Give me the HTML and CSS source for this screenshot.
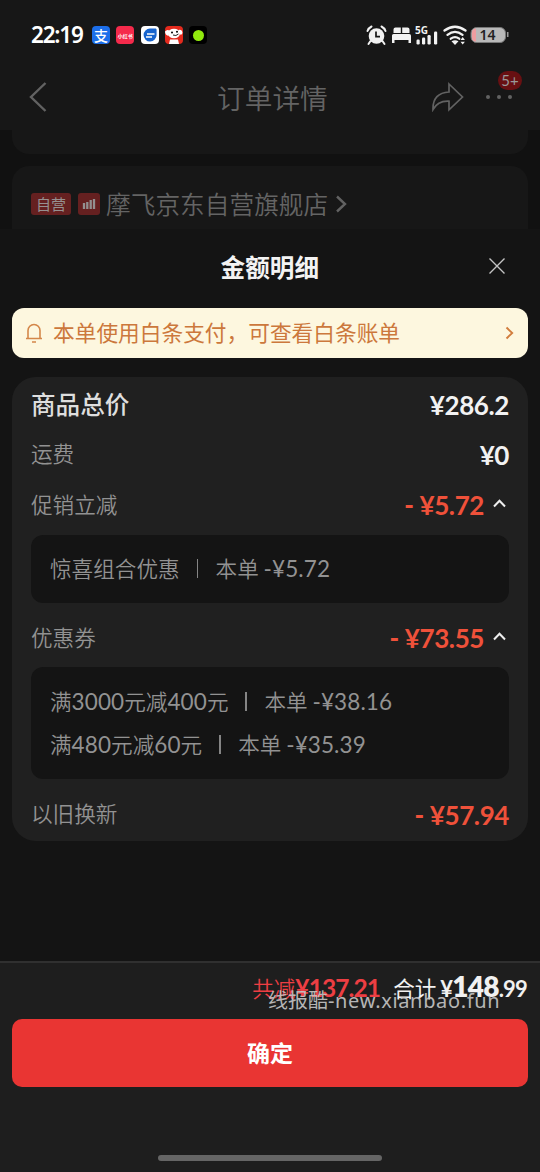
FILE: index.html
```html
<!DOCTYPE html>
<html lang="zh-CN">
<head>
<meta charset="utf-8">
<title>订单详情</title>
<link rel="stylesheet" href="styles.css">
</head>
<body>
<div class="phone">
  <header class="status">
    <span class="time">22:19</span>
    <div class="apps">
      <span class="app app-pay">支</span>
      <span class="app app-red">小红书</span>
      <span class="app app-white"><svg width="18" height="18" viewBox="0 0 18 18"><path d="M9 2.500h5.700q1 0 .9 1.500V9A6.500 6.500 0 1 1 9 2.500Z" fill="#1764ce"/><path d="M6 8h7.500M5 11h6" stroke="#fff" stroke-width="1.700"/></svg></span>
      <span class="app app-dog"><svg width="18" height="18" viewBox="0 0 18 18"><ellipse cx="9" cy="7.500" rx="6" ry="4.800" fill="#fff"/><path d="M0 5.500Q2 3 4.500 4.500L3.500 10Q0 9 0 5.500M13.500 4q3.500-1 4 3-1 3-3 1zM5 13.500h8l1 4.500H4z" fill="#fff"/><circle cx="7" cy="6.500" r="1"/><circle cx="12" cy="5.800" r="1"/><path d="M8 9q3 1.500 5.500-1" stroke="#222" fill="none"/></svg></span>
      <span class="app app-black"><i class="dot"></i></span>
    </div>
    <svg class="sys" width="144" height="24" viewBox="0 0 144 24">
      <g fill="#f2f2f2">
        <circle cx="10.500" cy="13" r="7.800"/>
        <path d="M4.500 18l-2 3M16.500 18l2 3M1.500 8q1-3 4-4.500M19.500 8q-1-3-4-4.500" stroke="#f2f2f2" stroke-width="2" fill="none" stroke-linecap="round"/>
        <path d="M10 8.500v5.200h4" stroke="#171717" stroke-width="1.700" fill="none"/>
        <path d="M27.500 10V6.500Q27.500 4.500 29.500 4.500h5.300V10zM36.200 10V4.500h5.300q2 0 2 2V10zM26 12.500q0-1.500 1.500-1.500h15.800q1.700 0 1.700 1.700V20h-2.500v-3h-14v3H26z"/>
        <rect x="50.500" y="16.500" width="3.200" height="5" rx="1.200"/><rect x="56" y="14.500" width="3.200" height="7" rx="1.200"/><rect x="61.500" y="12" width="3.200" height="9.500" rx="1.200"/><rect x="68" y="8.500" width="3.200" height="13" rx="1.200"/>
        <text x="49" y="10.500" class="net">5G</text>
        <path d="M78.500 7.500q10.500-7.500 21 0M81.500 11.800q7.500-5.800 15 0M84.800 15.700q4.200-3.200 8.400 0" fill="none" stroke="#f2f2f2" stroke-width="2.300" stroke-linecap="round"/>
        <path d="M85.500 18.300q3.500-2 7 0L89 22zM94.500 17l2.200-3 2.200 3zM94.500 18.700h4.400L96.700 21.500z"/>
      </g>
      <rect x="105" y="4.500" width="34.500" height="15" rx="5.500" fill="#b9b9b9" stroke="#777"/>
      <path d="M110 5.500q-4 0-4 4.500v4q0 4.500 4 4.500z" fill="#ef9da0"/>
      <path d="M141.700 9v5" stroke="#999" stroke-width="1.600"/>
      <text x="113.500" y="17.300" class="batt">14</text>
    </svg>
  </header>

  <nav class="nav">
    <svg width="20" height="32" viewBox="0 0 20 32"><path d="M17.500 2L3 16 17.500 30" class="grey-line wide"/></svg>
    <h1 class="nav-title">订单详情</h1>
    <svg class="share" width="34" height="30" viewBox="0 0 34 30"><path d="M18 2l13.500 13L18 27.800v-8.600Q7 18.500 2 27.500 1.500 11 18 10z" class="grey-line"/></svg>
    <div class="more"><i></i><i></i><i></i><span class="badge">5+</span></div>
  </nav>

  <div class="page-bg">
    <div class="prev-card"></div>
    <div class="shop-card">
      <span class="tag">自营</span>
      <span class="level"><svg width="14" height="12" viewBox="0 0 14 12"><path d="M2 5V11M5.300 4V11M8.700 2V11M12 1V11" stroke="#939090" stroke-width="2.300"/></svg></span>
      <span class="shop-name">摩飞京东自营旗舰店</span>
      <svg width="12" height="18" viewBox="0 0 12 18"><path d="M2 1.500L10 9 2 16.500" class="grey-line wide"/></svg>
    </div>
  </div>

  <main class="sheet">
    <div class="sheet-head">
      <h2>金额明细</h2>
      <svg class="close" width="18" height="18" viewBox="0 0 18 18"><path d="M1.500 1.500l15 15M16.500 1.500l-15 15" stroke="#c4c4c4" stroke-width="1.400"/></svg>
    </div>
    <div class="notice">
      <svg width="18" height="22" viewBox="0 0 18 22"><path d="M1 16.500h16M3 16.500V8.500a6 6 0 0 1 12 0V16.500M7 20h4" fill="none" stroke="#d4874a" stroke-width="1.600"/></svg>
      <span class="notice-text">本单使用白条支付，可查看白条账单</span>
      <svg width="9" height="14" viewBox="0 0 9 14"><path d="M1.500 1.500L7.200 7 1.500 12.500" fill="none" stroke="#d17d3d" stroke-width="1.900"/></svg>
    </div>
    <section class="card">
      <div class="row total"><span class="label">商品总价</span><span class="price">¥286.2</span></div>
      <div class="row"><span class="label">运费</span><span class="price">¥0</span></div>
      <div class="row tall"><span class="label">促销立减</span><span class="price off"><b>-</b>¥5.72</span><svg class="up" width="13" height="9" viewBox="0 0 13 9"><path d="M1 7.500l5.500-5.700L12 7.500"/></svg></div>
      <div class="box"><p><span>惊喜组合优惠</span><i class="bar"></i><span>本单 <span class="num">-¥5.72</span></span></p></div>
      <div class="row tall coupon"><span class="label">优惠券</span><span class="price off"><b>-</b>¥73.55</span><svg class="up" width="13" height="9" viewBox="0 0 13 9"><path d="M1 7.500l5.500-5.700L12 7.500"/></svg></div>
      <div class="box two"><p><span>满<span class="num">3000</span>元减<span class="num">400</span>元</span><i class="bar"></i><span>本单 <span class="num">-¥38.16</span></span></p><p><span>满<span class="num">480</span>元减<span class="num">60</span>元</span><i class="bar"></i><span>本单 <span class="num">-¥35.39</span></span></p></div>
      <div class="row trade"><span class="label">以旧换新</span><span class="price off"><b>-</b>¥57.94</span></div>
    </section>
  </main>

  <footer class="footer">
    <div class="sum">
      <span class="saved">共减<span class="saved-num">¥137.21</span></span>
      <span class="pay">合计</span>
      <span class="pay-num"><small class="yen">¥</small>148<small>.99</small></span>
      <span class="mark">线报酷<span class="mark-latin">-new.xianbao.fun</span></span>
    </div>
    <button class="ok">确定</button>
    <div class="home"></div>
  </footer>
</div>
</body>
</html>
```
FILE: styles.css
```css
* { box-sizing: border-box; margin: 0; padding: 0; }
body { background: #141414; font-family: "Noto Sans CJK SC", sans-serif; }
i { font-style: normal; }
svg { display: block; flex: none; }
.phone { width: 540px; height: 1172px; display: flex; flex-direction: column; overflow: hidden; background: #141414; white-space: nowrap; }

.status { height: 70px; flex: none; display: flex; align-items: center; padding: 0 30px 0 31px; background: #171717; }
.time { width: 61px; font: 600 22.500px/30px "Noto Sans", sans-serif; letter-spacing: -1.200px; color: #fff; }
.apps { display: flex; gap: 6.300px; }
.app { width: 18px; height: 18px; border-radius: 4px; overflow: hidden; display: flex; align-items: center; justify-content: center; color: #fff; }
.app-pay { background: #1c6eea; font-size: 14px; font-weight: 500; line-height: 18px; padding-bottom: 1px; }
.app-red { background: #f52a4b; font-size: 5px; font-weight: 700; }
.app-white { background: #fff; }
.app-dog { background: #e42a1d; }
.app-black { background: #000; }
.dot { width: 11px; height: 11px; border-radius: 50%; background: #91e90d; }
.sys { margin-left: auto; }
.net { font: 700 10px "Noto Sans", sans-serif; }
.batt { font: 600 14px "Noto Sans", sans-serif; fill: #222; }

.nav { height: 60px; flex: none; display: flex; align-items: center; padding: 0 26px 7px 28px; background: #171717; }
.nav-title { margin-left: 169px; width: 214px; font-size: 27.700px; line-height: 40px; font-weight: 350; color: #646464; }
.grey-line { fill: none; stroke: #626262; stroke-width: 1.700; }
.wide { stroke-width: 2.400; }
.more { position: relative; display: flex; gap: 7px; margin-left: 21px; }
.more i { width: 4px; height: 4px; border-radius: 50%; background: #626262; }
.badge { position: absolute; left: 12px; top: -24px; width: 24px; height: 19px; border-radius: 10px; background: #681012; color: #999; font: 15px/19px Lato, sans-serif; text-align: center; }

.page-bg { height: 99px; flex: none; padding: 0 12px; background: #111; }
.prev-card { height: 24px; background: #171717; border-radius: 0 0 17px 17px; }
.shop-card { height: 70px; margin-top: 12px; padding: 6px 19px 0; border-radius: 17px 17px 0 0; background: #171717; display: flex; align-items: center; }
.tag, .level { height: 22px; border-radius: 3px; background: #652020; color: #969090; }
.tag { width: 40px; font-size: 15px; line-height: 21px; text-align: center; }
.level { width: 22px; margin: 0 6px 0 7px; display: flex; align-items: center; justify-content: center; }
.shop-name { font-size: 24.700px; line-height: 36px; color: #646464; font-weight: 350; margin-right: 7px; padding-bottom: 2px; }

.sheet { height: 732px; flex: none; background: #141414; padding: 0 12px; }
.sheet-head { height: 79px; display: flex; align-items: center; justify-content: flex-end; padding-right: 22px; padding-bottom: 5px; }
.sheet-head h2 { font-size: 24.600px; line-height: 36px; font-weight: 600; color: #f3f3f3; margin-right: 169px; }
.notice { height: 50px; border-radius: 12px; background: #fdf7df; display: flex; align-items: center; padding: 0 14px 0 13px; color: #cc783c; }
.notice-text { flex: 1; padding: 0 0 2px 10px; font-size: 21.700px; line-height: 32px; }
.card { margin-top: 19px; height: 464px; border-radius: 24px; background: #202020; padding: 2px 19px 0; }
.row { height: 50px; display: flex; align-items: center; }
.label { flex: 1; font-size: 21.600px; line-height: 32px; color: #929292; font-weight: 350; padding-bottom: 2px; }
.total .label { font-size: 24.600px; font-weight: 500; color: #dedede; }
.price { font: 700 26px/34px Lato, sans-serif; letter-spacing: -.4px; color: #f2f2f2; padding-top: 1px; }
.off { color: #ef513a; }
.off b { margin-right: 6px; }
.up { margin: 0 3px 3px 9px; fill: none; stroke: #eee; stroke-width: 2; }
.tall { height: 51px; }
.box { margin-top: 5px; height: 68px; border-radius: 12px; background: #141414; padding: 11px 19px; }
.box p { height: 44px; display: flex; align-items: center; font-size: 21.600px; line-height: 32px; color: #929292; font-weight: 350; }
.num { font-family: Lato, sans-serif; font-weight: 400; font-size: 22.500px; letter-spacing: .1px; }
.bar { width: 1.500px; height: 19px; background: #858585; margin: 0 17.500px 0 17px; }
.coupon { margin-top: 9px; }
.two { margin-top: 4px; height: 112px; padding-top: 12px; }
.two p + p { height: 43px; }
.trade { margin-top: 9px; height: 52px; }

.footer { flex: 1; border-top: 2px solid #303030; background: #1e1e1e; padding: 0 12px; display: flex; flex-direction: column; align-items: center; }
.sum { position: relative; width: 516px; height: 55.500px; flex: none; display: flex; align-items: baseline; justify-content: flex-end; padding: 6px 1px 0 0; line-height: 38px; }
.saved { color: #ed3e43; font-size: 21.600px; font-weight: 350; margin-right: 13px; }
.saved-num { font: 700 24.500px/30px Lato, sans-serif; letter-spacing: -.9px; }
.pay { color: #f1f1f1; font-size: 21.600px; margin-right: 4px; }
.pay-num { color: #f1f1f1; font: 800 28px/34px Lato, sans-serif; letter-spacing: -.8px; }
.pay-num small { font-size: 22px; font-weight: 700; }
.mark { position: absolute; left: 256px; top: 21px; font-size: 20px; line-height: 32px; color: #c6c6c6; opacity: .9; }
.mark-latin { font-family: "Noto Sans", sans-serif; font-size: 20px; letter-spacing: .65px; }
.ok { width: 516px; height: 68px; flex: none; border: 0; border-radius: 10px; background: #e93533; color: #fff; font: 600 23px/34px "Noto Sans CJK SC", sans-serif; padding-bottom: 2px; }
.home { width: 224px; height: 6px; margin-top: 68.500px; border-radius: 3px; background: #656565; }
```
